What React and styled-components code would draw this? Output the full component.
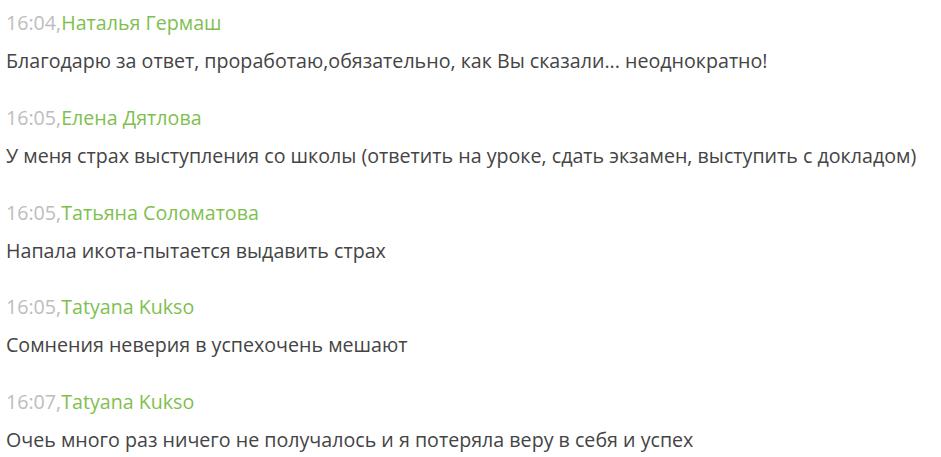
import React from "react";
import styled, { createGlobalStyle } from "styled-components";

const GlobalStyle = createGlobalStyle`
  body {
    margin: 0;
    background: #fff;
    font-family: "Open Sans", "Noto Sans", sans-serif;
  }
`;

const StyledList = styled.div`
  display: flex;
  flex-direction: column;
  padding: 9px 6px 0 6px;
  gap: 28.8px;
`;

const StyledMessage = styled.div`
  display: flex;
  flex-direction: column;
  gap: 10px;
`;

const StyledHeader = styled.div`
  font-size: 19.65px;
  line-height: 28px;
`;

const StyledTime = styled.span`
  color: #bdbdbd;
`;

const StyledName = styled.span`
  color: #80bf4f;
`;

const StyledText = styled.div`
  font-size: 19.65px;
  line-height: 28px;
  color: #444;
  white-space: nowrap;
`;

const messages = [
  { time: "16:04", name: "Наталья Гермаш", text: "Благодарю за ответ, проработаю,обязательно, как Вы сказали... неоднократно!" },
  {
    time: "16:05",
    name: "Елена Дятлова",
    text: "У меня страх выступления со школы (ответить на уроке, сдать экзамен, выступить с докладом)",
  },
  { time: "16:05", name: "Татьяна Соломатова", text: "Напала икота-пытается выдавить страх" },
  { time: "16:05", name: "Tatyana Kukso", text: "Сомнения неверия в успехочень мешают" },
  { time: "16:07", name: "Tatyana Kukso", text: "Очеь много раз ничего не получалось и я потеряла веру в себя и успех" },
];

const App = () => {
  return (
    <>
      <GlobalStyle />
      <StyledList>
        {messages.map((m, index) => {
          return (
            <StyledMessage key={index}>
              <StyledHeader>
                <StyledTime>{m.time},</StyledTime>
                <StyledName>{m.name}</StyledName>
              </StyledHeader>
              <StyledText>{m.text}</StyledText>
            </StyledMessage>
          );
        })}
      </StyledList>
    </>
  );
};

export default App;
